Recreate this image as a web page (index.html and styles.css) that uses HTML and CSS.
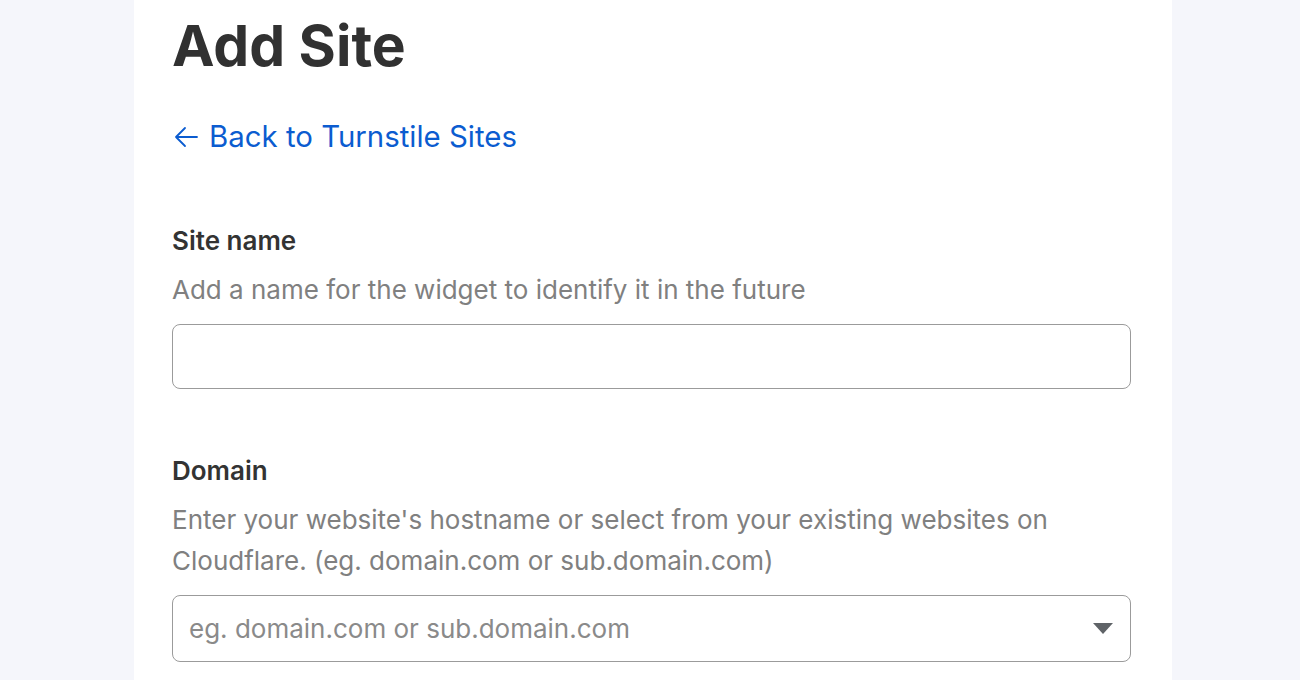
FILE: index.html
```html
<!DOCTYPE html>
<html>
<head>
<meta charset="utf-8">
<link rel="stylesheet" href="styles.css">
</head>
<body>
<div class="page">
  <main class="panel">
    <h1 class="title">Add Site</h1>
    <a class="back" href="#">
      <svg class="back-arrow" width="26" height="22" viewBox="0 0 26 22" fill="none" stroke="currentColor" stroke-width="1.8" stroke-linecap="round" stroke-linejoin="round">
        <path d="M24 11H3M12 2L3 11L12 20"/>
      </svg>
      <span>Back to Turnstile Sites</span>
    </a>
    <section class="field field-first">
      <div class="label">Site name</div>
      <div class="desc">Add a name for the widget to identify it in the future</div>
      <div class="input"></div>
    </section>
    <section class="field">
      <div class="label">Domain</div>
      <div class="desc">Enter your website's hostname or select from your existing websites on Cloudflare. (eg. domain.com or sub.domain.com)</div>
      <div class="input select">
        <span class="placeholder">eg. domain.com or sub.domain.com</span>
        <svg class="caret" width="20" height="11" viewBox="0 0 20 11"><path d="M0 0H20L10 11Z" fill="#5f6367"/></svg>
      </div>
    </section>
  </main>
</div>
</body>
</html>
```
FILE: styles.css
```css
html, body {
  margin: 0;
  padding: 0;
  height: 100%;
}
body {
  background: #f5f6fb;
  font-family: "Inter", "Liberation Sans", sans-serif;
  overflow: hidden;
}
.page {
  display: flex;
  justify-content: flex-start;
  padding-left: 134px;
  height: 100%;
}
.panel {
  width: 959px;
  background: #ffffff;
  padding: 6px 41px 0 38px;
  height: 100%;
}
.title {
  margin: 0;
  font-size: 57px;
  line-height: 80px;
  font-weight: 700;
  color: #313131;
}
.back {
  display: flex;
  align-items: center;
  gap: 10px;
  margin-top: 33px;
  color: #0b5cd0;
  text-decoration: none;
  font-size: 29.4px;
  line-height: 36px;
}
.back-arrow {
  margin-left: 1px;
}
.field-first {
  margin-top: 70px;
}
.field {
  display: flex;
  flex-direction: column;
}
.field + .field {
  margin-top: 66px;
}
.label {
  font-size: 26px;
  font-weight: 600;
  line-height: 32px;
  color: #333333;
}
.desc {
  margin-top: 12px;
  font-size: 26px;
  line-height: 41px;
  color: #808080;
}
.input {
  margin-top: 14px;
  border: 1px solid #9b9b9b;
  border-radius: 8px;
  box-sizing: border-box;
  height: 65px;
}
.select {
  height: 67px;
  display: flex;
  align-items: center;
  justify-content: space-between;
  padding: 0 17px 0 16px;
}
.placeholder {
  font-size: 26px;
  color: #8a8a8a;
}
.caret {
  display: block;
}
```
